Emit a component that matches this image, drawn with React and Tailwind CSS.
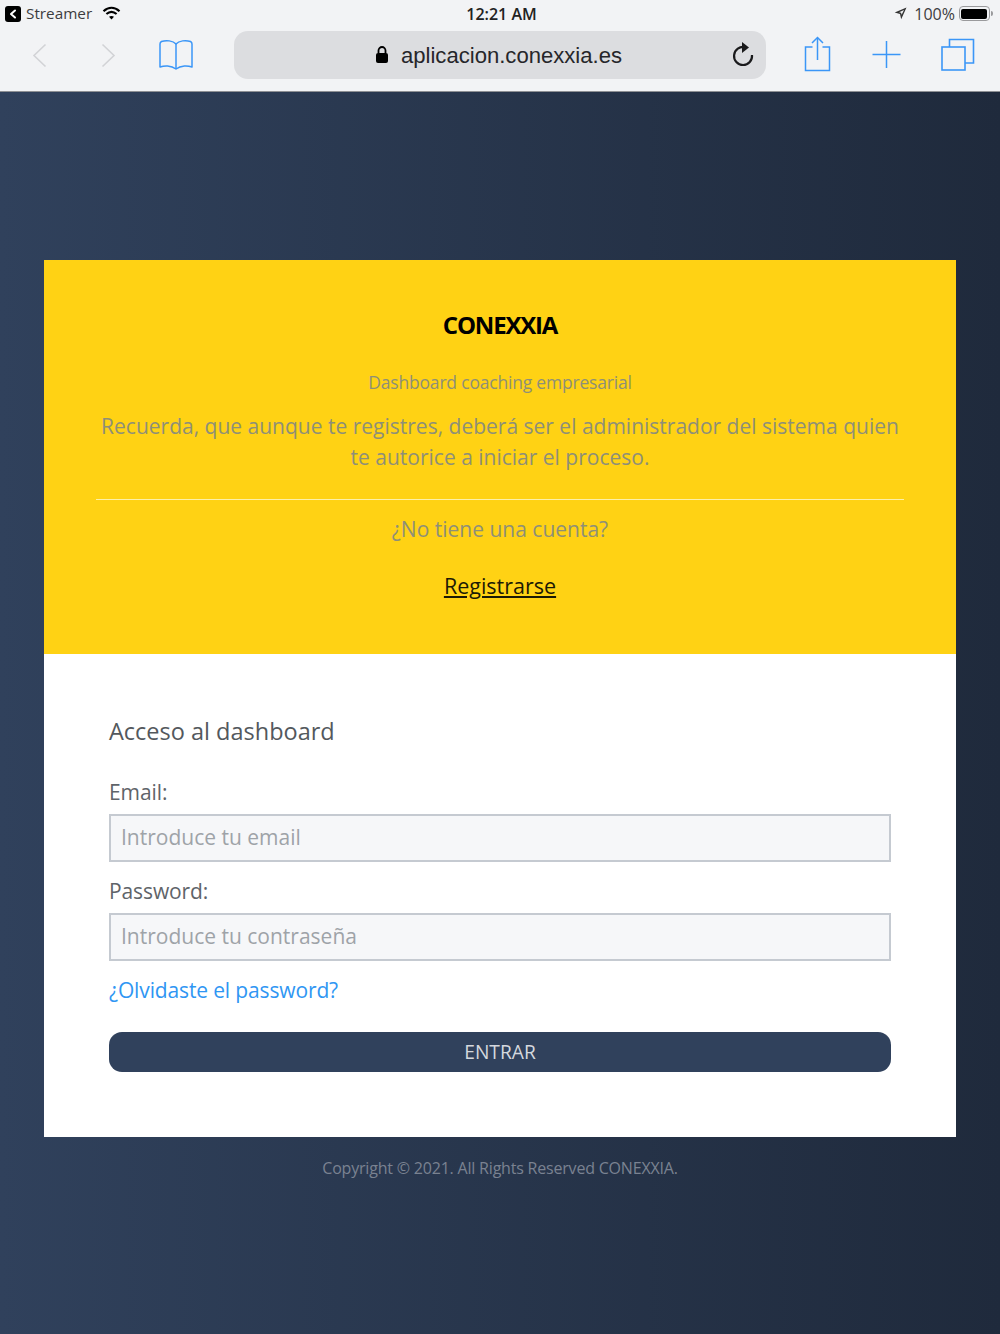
import React from 'react';

const BLUE = '#3b96f7';

const StatusBar = () => (
  <div className="h-[27px] flex items-center justify-between pl-[5px] pr-[7px] text-[15px] text-[#3c3c3e]">
    <div className="w-[300px] flex items-center">
      <span className="w-[16px] h-[16px] rounded-[3px] bg-black flex items-center justify-center">
        <svg width="8" height="10" viewBox="0 0 8 10" fill="none" stroke="#fff" strokeWidth="2" strokeLinecap="round" strokeLinejoin="round"><path d="M6 1.5 2 5l4 3.500" /></svg>
      </span>
      <span className="ml-[5px] text-[15.300px]">Streamer</span>
      <svg className="ml-[10px] mb-[2px]" width="19" height="14" viewBox="0 0 19 14" fill="none" stroke="#000" strokeWidth="2.200"><path d="M1.500 5.200C6.400.8 12.600.8 17.500 5.200" /><path d="M4.400 8C7.500 5.300 11.500 5.300 14.600 8" /><path d="M9.500 13.400 7 10.700c1.500-1.100 3.500-1.100 5 0z" fill="#000" stroke="none" /></svg>
    </div>
    <span className="font-semibold text-[16px] text-[#222] ml-[5px]">12:21 AM</span>
    <div className="w-[300px] flex items-center justify-end">
      <svg width="13" height="13" viewBox="0 0 13 13" fill="#333"><path d="M12.500.5 7.200 12.300 6 7 .7 5.600zM10 3 5.100 5.200l2 .6.5 2z" fillRule="evenodd" /></svg>
      <span className="ml-[7px] text-[16px]">100%</span>
      <span className="ml-[4px] w-[31px] h-[15px] rounded-[4px] border border-[#9a9a9c] p-[1.500px] flex">
        <span className="flex-1 rounded-[2px] bg-black" />
      </span>
      <span className="ml-[1px] w-[2px] h-[5px] rounded-r-sm bg-[#9a9a9c]" />
    </div>
  </div>
);

const Toolbar = () => (
  <div className="h-[64px] flex items-start">
    <div className="w-[234px] h-[50px] flex items-center shrink-0 pt-[6px]">
      <svg className="ml-[32px]" width="15" height="25" viewBox="0 0 15 25" fill="none" stroke="#d2d3d6" strokeWidth="1.600"><path d="M13.500 1.500 2 12.500l11.500 11" /></svg>
      <svg className="ml-[54px]" width="15" height="25" viewBox="0 0 15 25" fill="none" stroke="#d2d3d6" strokeWidth="1.600"><path d="M1.500 1.500 13 12.500l-11.500 11" /></svg>
      <svg className="ml-[43px]" width="34" height="32" viewBox="0 0 34 32" fill="none" stroke={BLUE} strokeWidth="1.500" strokeLinejoin="round"><path d="M17 5C14 1.500 7 1 2.500 2.500 1.500 3 1 3.500 1 5v23c4-1.500 11-2 16 2 5-4 12-3.500 16-2V5c0-1.500-.5-2-1.500-2.500C27 1 20 1.500 17 5z" /><path d="M17 5v25" /></svg>
    </div>
    <div className="w-[532px] h-[48px] mt-[4px] rounded-[14px] bg-[#dcdde0] flex items-center shrink-0 relative">
      <div className="flex-1 flex items-center justify-center text-[22.100px] text-[#26262a] font-['Liberation_Sans',sans-serif] pr-[3px]">
        <svg className="mr-[12px]" width="14" height="19" viewBox="0 0 14 19"><path d="M3.500 8V5.500a3.500 3.500 0 0 1 7 0V8" fill="none" stroke="#000" strokeWidth="1.800" /><rect x="1" y="8" width="12" height="10" rx="2" fill="#000" /></svg>
        <span className="pt-[2px]">aplicacion.conexxia.es</span>
      </div>
      <svg className="absolute right-[11px] top-[10px]" width="24" height="27" viewBox="0 0 24 27" fill="none" stroke="#1a1a1c" strokeWidth="2.200"><path d="M14 6.200A9 9 0 1 0 21 14" /><path d="M11 1l7 5.500-7 5.500z" fill="#1a1a1c" stroke="none" /></svg>
    </div>
    <div className="flex items-center pt-[4px] h-[50px]">
      <svg className="ml-[38px]" width="27" height="36" viewBox="0 0 27 36" fill="none" stroke={BLUE} strokeWidth="1.500"><path d="M8.500 11H1.500v23.500h24V11h-7" /><path d="M13.500 24V2" /><path d="M8 7l5.500-5.500L19 7" /></svg>
      <svg className="ml-[41px]" width="29" height="29" viewBox="0 0 29 29" fill="none" stroke={BLUE} strokeWidth="1.500"><path d="M14.500 1v27M.5 14.500h28" /></svg>
      <svg className="ml-[40px]" width="34" height="33" viewBox="0 0 34 33" fill="none" stroke={BLUE} strokeWidth="1.600"><rect x="1" y="9" width="23" height="23" /><path d="M8.500 9V1.500h24V25H24" /></svg>
    </div>
  </div>
);

const Field = ({ label, placeholder }) => (
  <div>
    <label className="block text-[21px] leading-[28px] tracking-[-0.100px] text-[#5f6469] mb-[8px]">{label}</label>
    <input
      readOnly
      placeholder={placeholder}
      className="block w-full h-[48px] bg-[#f6f7f9] border-2 border-[#c5cad1] px-[10px] pb-[2px] text-[21px] outline-none placeholder:text-[#9ea3a8]"
    />
  </div>
);

export default function App() {
  return (
    <div className="w-[1000px] h-[1334px] flex flex-col overflow-hidden font-['Open_Sans',sans-serif]">
      {/* Safari chrome */}
      <div className="h-[92px] bg-[#f2f3f5] border-b border-[#8e9094] shrink-0">
        <StatusBar />
        <Toolbar />
      </div>

      <div className="flex-1 bg-gradient-to-r from-[#30415c] to-[#1f2a3c] px-[44px] pt-[168px]">
        <div className="bg-[#ffd214] h-[394px] pt-[49px] px-[52px] text-center text-[#8e8f78]">
          <h1 className="text-[24px] leading-[32px] font-bold text-black tracking-[-1.200px]">CONEXXIA</h1>
          <p className="mt-[29px] text-[17.500px] leading-[24px] tracking-[-0.200px]">Dashboard coaching empresarial</p>
          <p className="mt-[17px] text-[21px] leading-[31px]">
            Recuerda, que aunque te registres, deberá ser el administrador del sistema quien te autorice a iniciar el proceso.
          </p>
          <div className="mt-[26px] border-t border-[#fdf0a8]" />
          <p className="mt-[14px] text-[21px] leading-[30px]">¿No tiene una cuenta?</p>
          <a className="inline-block mt-[27px] text-[21.500px] leading-[30px] text-[#1c1a05] underline">Registrarse</a>
        </div>

        <div className="bg-white h-[483px] pt-[59px] px-[65px]">
          <h2 className="text-[23.500px] leading-[36px] text-[#53585d]">Acceso al dashboard</h2>
          <div className="mt-[29px] flex flex-col gap-[15px]">
            <Field label="Email:" placeholder="Introduce tu email" />
            <Field label="Password:" placeholder="Introduce tu contraseña" />
          </div>
          <a className="block mt-[14px] text-[21px] leading-[30px] tracking-[-0.140px] text-[#2f96f3]">¿Olvidaste el password?</a>
          <button className="mt-[27px] w-full h-[40px] rounded-[13px] bg-[#30415c] text-[#d4d8de] text-[19.200px]">ENTRAR</button>
        </div>

        <p className="mt-[20px] text-center text-[16px] leading-[22px] text-[#7a8291] tracking-[-0.200px]">Copyright © 2021. All Rights Reserved CONEXXIA.</p>
      </div>
    </div>
  );
}
